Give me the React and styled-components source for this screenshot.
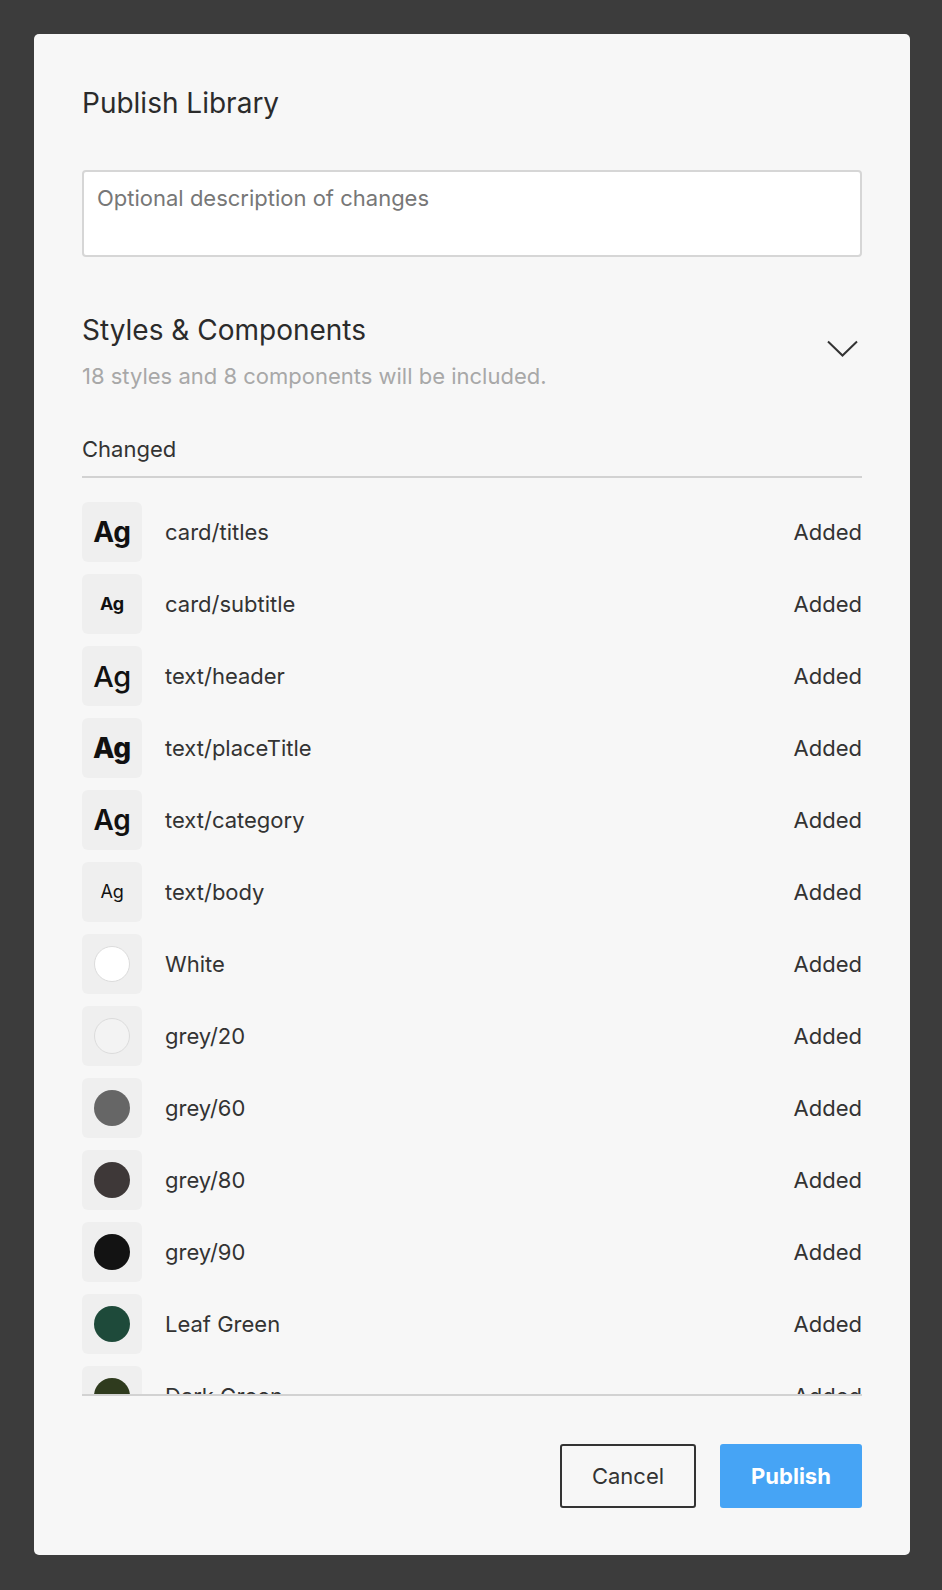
import React from 'react';
import styled, { createGlobalStyle } from 'styled-components';

const GlobalStyle = createGlobalStyle`
  html, body {
    margin: 0;
    background: #3c3c3c;
    font-family: Inter, 'Noto Sans', sans-serif;
    color: #333;
  }
`;

const Page = styled.div`
  padding: 34px 32px 34px 34px;
`;

const Dialog = styled.div`
  width: 876px;
  height: 1521px;
  box-sizing: border-box;
  background: #f7f7f7;
  border-radius: 5px;
  padding: 53px 48px 47px;
  display: flex;
  flex-direction: column;
`;

const Title = styled.h1`
  margin: 0;
  font-size: 28px;
  line-height: 32px;
  font-weight: 400;
  color: #2b2b2b;
`;

const Description = styled.textarea`
  margin-top: 51px;
  height: 87px;
  box-sizing: border-box;
  border: 2px solid #d6d6d6;
  border-radius: 4px;
  background: #fff;
  padding: 13px 13px;
  font-family: Inter, sans-serif;
  font-size: 22px;
  line-height: 26px;
  color: #333;
  resize: none;
  outline: none;

  &::placeholder {
    color: #777;
  }
`;

const SectionHeader = styled.div`
  margin-top: 57px;
  display: flex;
  align-items: center;
  justify-content: space-between;
`;

const SectionTitle = styled.h2`
  margin: 0;
  font-size: 28px;
  line-height: 32px;
  font-weight: 400;
  color: #2b2b2b;
`;

const SectionSub = styled.p`
  margin: 18px 0 0;
  font-size: 22px;
  line-height: 24px;
  color: #a8a8a8;
`;

const Chevron = styled.svg`
  width: 31px;
  height: 17px;
  margin-right: 4px;
  margin-top: -6px;
`;

const GroupLabel = styled.div`
  margin-top: 49px;
  padding-bottom: 15px;
  border-bottom: 2px solid #d2d2d2;
  font-size: 22px;
  line-height: 24px;
  color: #333;
`;

const List = styled.div`
  height: 918px;
  overflow: hidden;
  padding-top: 24px;
  box-sizing: border-box;
  border-bottom: 2px solid #d2d2d2;
  display: flex;
  flex-direction: column;
  gap: 12px;
`;

const Row = styled.div`
  display: flex;
  align-items: center;
  flex-shrink: 0;
  height: 60px;
`;

const Thumb = styled.div`
  width: 60px;
  height: 60px;
  border-radius: 6px;
  background: #efefef;
  display: flex;
  align-items: center;
  justify-content: center;
  flex-shrink: 0;
`;

const Glyph = styled.span`
  font-size: ${p => p.size}px;
  font-weight: ${p => p.weight};
  color: #111;
  letter-spacing: -0.3px;
  line-height: 1;
`;

const Swatch = styled.span`
  width: 36px;
  height: 36px;
  border-radius: 50%;
  box-sizing: border-box;
  background: ${p => p.color};
  border: ${p => (p.outlined ? '1px solid #dcdcdc' : 'none')};
`;

const Name = styled.span`
  flex: 1;
  margin-left: 23px;
  font-size: 22px;
  color: #333;
`;

const Status = styled.span`
  font-size: 22px;
  color: #333;
`;

const Footer = styled.div`
  margin-top: 48px;
  display: flex;
  justify-content: flex-end;
  gap: 24px;
`;

const Button = styled.button`
  height: 64px;
  box-sizing: border-box;
  border-radius: 3px;
  font-family: Inter, sans-serif;
  font-size: 22px;
  cursor: pointer;
`;

const CancelButton = styled(Button)`
  width: 136px;
  background: transparent;
  border: 2px solid #333;
  color: #333;
`;

const PublishButton = styled(Button)`
  width: 142px;
  background: #46a4f5;
  border: none;
  color: #fff;
  font-weight: 700;
`;

const items = [
  { name: 'card/titles', glyph: { size: 28, weight: 700 } },
  { name: 'card/subtitle', glyph: { size: 18, weight: 700 } },
  { name: 'text/header', glyph: { size: 29, weight: 500 } },
  { name: 'text/placeTitle', glyph: { size: 28, weight: 800 } },
  { name: 'text/category', glyph: { size: 28, weight: 600 } },
  { name: 'text/body', glyph: { size: 18, weight: 400 } },
  { name: 'White', color: '#ffffff', outlined: true },
  { name: 'grey/20', color: '#f3f3f3', outlined: true },
  { name: 'grey/60', color: '#666666' },
  { name: 'grey/80', color: '#3e3838' },
  { name: 'grey/90', color: '#131313' },
  { name: 'Leaf Green', color: '#1e4a3a' },
  { name: 'Dark Green', color: '#2f3b1e' },
];

export default function App() {
  return (
    <>
      <GlobalStyle />
      <Page>
        <Dialog>
          <Title>Publish Library</Title>
          <Description placeholder="Optional description of changes" />

          <SectionHeader>
            <div>
              <SectionTitle>Styles &amp; Components</SectionTitle>
              <SectionSub>18 styles and 8 components will be included.</SectionSub>
            </div>
            <Chevron viewBox="0 0 31 17" fill="none">
              <path d="M1 1.5 L15.5 15.5 L30 1.5" stroke="#333" strokeWidth="2" />
            </Chevron>
          </SectionHeader>

          <GroupLabel>Changed</GroupLabel>
          <List>
            {items.map(item => (
              <Row key={item.name}>
                <Thumb>
                  {item.glyph ? (
                    <Glyph size={item.glyph.size} weight={item.glyph.weight}>Ag</Glyph>
                  ) : (
                    <Swatch color={item.color} outlined={item.outlined} />
                  )}
                </Thumb>
                <Name>{item.name}</Name>
                <Status>Added</Status>
              </Row>
            ))}
          </List>

          <Footer>
            <CancelButton>Cancel</CancelButton>
            <PublishButton>Publish</PublishButton>
          </Footer>
        </Dialog>
      </Page>
    </>
  );
}
